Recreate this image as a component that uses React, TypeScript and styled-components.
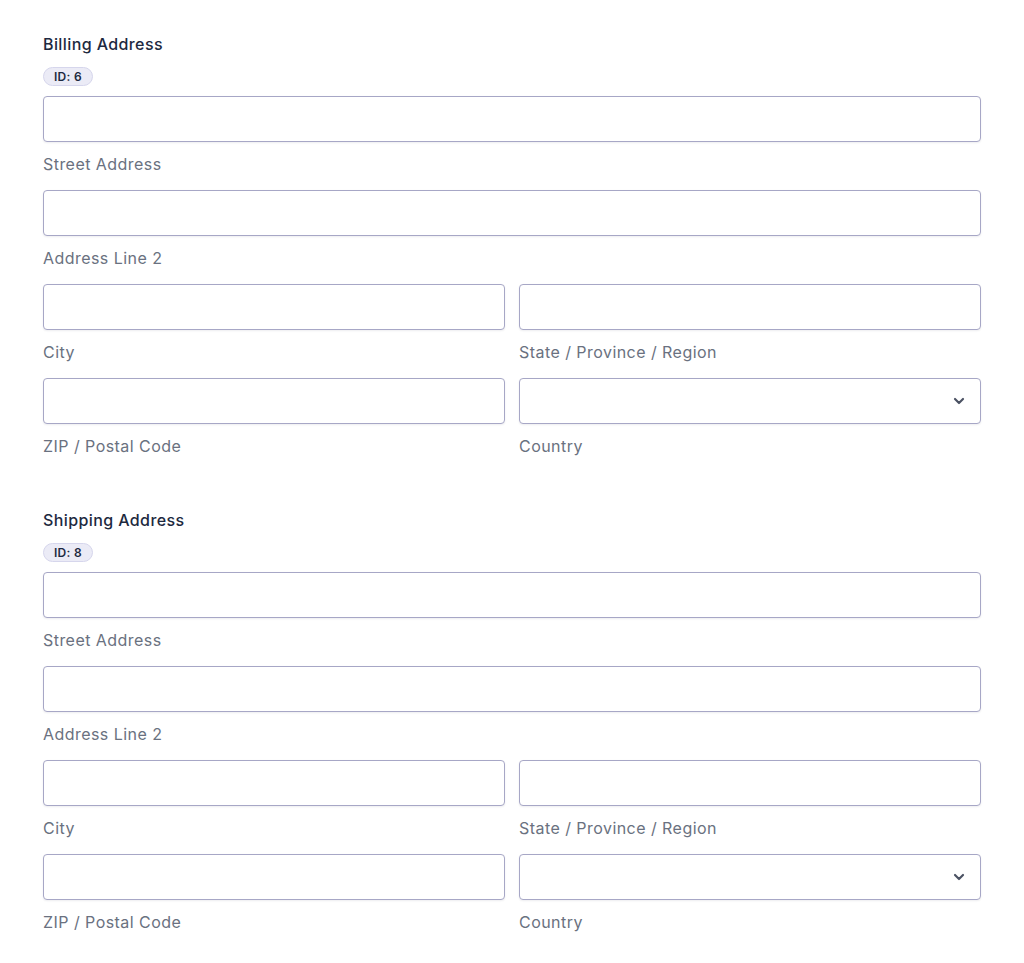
import React from "react";
import styled, { createGlobalStyle } from "styled-components";

const Global = createGlobalStyle`
  html, body { margin: 0; padding: 0; background: #ffffff; }
  body { font-family: Inter, "Noto Sans", sans-serif; -webkit-font-smoothing: antialiased; }
  * { box-sizing: border-box; }
`;

const Page = styled.div`
  padding: 32px 43px 20px 43px;
  width: 1024px;
  display: flex;
  flex-direction: column;
  gap: 50px;
`;

const Section = styled.section`
  display: flex;
  flex-direction: column;
`;

const Heading = styled.h2`
  margin: 0;
  font-size: 16px;
  line-height: 24px;
  font-weight: 500;
  letter-spacing: 0.4px;
  color: #1d2940;
`;

const Badge = styled.span`
  align-self: flex-start;
  margin-top: 11px;
  height: 19px;
  padding: 0 10px;
  display: inline-flex;
  align-items: center;
  border-radius: 10px;
  background: #ebebf6;
  border: 1px solid #d6d6ec;
  font-size: 12px;
  font-weight: 600;
  letter-spacing: 0.3px;
  color: #1d2940;
`;

const Fields = styled.div`
  margin-top: 10px;
  display: grid;
  grid-template-columns: 1fr 1fr;
  column-gap: 14px;
  row-gap: 14px;
`;

const Field = styled.div<{ $full?: boolean }>`
  grid-column: ${(p) => (p.$full ? "1 / span 2" : "auto")};
  display: flex;
  flex-direction: column;
`;

const Box = styled.div`
  position: relative;
  height: 46px;
  border: 1px solid #a7a7c6;
  border-radius: 4px;
  background: #fff;
  box-shadow: 0 1px 2px rgba(30, 30, 60, 0.08);
  display: flex;
  align-items: center;
  justify-content: flex-end;
  padding-right: 13px;
`;

const Label = styled.label`
  margin-top: 10px;
  font-size: 16px;
  line-height: 24px;
  letter-spacing: 0.45px;
  color: #6a7180;
`;

const Chevron = () => (
  <svg width="16" height="16" viewBox="0 0 24 24" fill="none" stroke="#4b5263" strokeWidth="3.2" strokeLinecap="round" strokeLinejoin="round">
    <path d="M6 9l6 6 6-6" />
  </svg>
);

const AddressBlock = ({ title, id }: { title: string; id: number }) => (
  <Section>
    <Heading>{title}</Heading>
    <Badge>ID: {id}</Badge>
    <Fields>
      <Field $full>
        <Box />
        <Label>Street Address</Label>
      </Field>
      <Field $full>
        <Box />
        <Label>Address Line 2</Label>
      </Field>
      <Field>
        <Box />
        <Label>City</Label>
      </Field>
      <Field>
        <Box />
        <Label>State / Province / Region</Label>
      </Field>
      <Field>
        <Box />
        <Label>ZIP / Postal Code</Label>
      </Field>
      <Field>
        <Box>
          <Chevron />
        </Box>
        <Label>Country</Label>
      </Field>
    </Fields>
  </Section>
);

export default function App() {
  return (
    <>
      <Global />
      <Page>
        <AddressBlock title="Billing Address" id={6} />
        <AddressBlock title="Shipping Address" id={8} />
      </Page>
    </>
  );
}
